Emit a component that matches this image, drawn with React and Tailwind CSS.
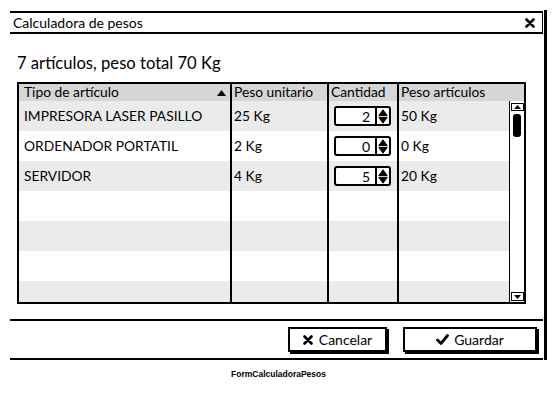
import React from 'react';

const rows = [
  { name: 'IMPRESORA LASER PASILLO', unit: '25 Kg', qty: 2, total: '50 Kg' },
  { name: 'ORDENADOR PORTATIL', unit: '2 Kg', qty: 0, total: '0 Kg' },
  { name: 'SERVIDOR', unit: '4 Kg', qty: 5, total: '20 Kg' },
  null,
  null,
  null,
  null,
];

const Spinner = ({ value }) => (
  <div className="flex h-[20px] w-[57px] border-2 border-black rounded-[3px] bg-white">
    <div className="flex-1 flex items-center justify-end pr-[5px] text-[14px]">{value}</div>
    <div className="w-[14px] border-l-2 border-black flex items-center justify-center">
      <svg width="10" height="15" viewBox="0 0 10 15">
        <path d="M5 0.8 L9.2 6.6 L0.8 6.6 Z" fill="#000" strokeLinejoin="round" stroke="#000" />
        <path d="M5 14.2 L9.2 8.4 L0.8 8.4 Z" fill="#000" strokeLinejoin="round" stroke="#000" />
      </svg>
    </div>
  </div>
);

const Row = ({ row, index }) => (
  <div className={`flex h-[30px] shrink-0 ${index % 2 === 0 ? 'bg-[#ebebeb]' : 'bg-white'}`}>
    <div className="w-[213px] flex items-center pl-[5px] border-r-2 border-black">{row?.name}</div>
    <div className="w-[97px] flex items-center pl-[2px] border-r-2 border-black">{row?.unit}</div>
    <div className="w-[70px] flex items-center pl-[5px] border-r-2 border-black">
      {row && <Spinner value={row.qty} />}
    </div>
    <div className="flex-1 flex items-center pl-[2px]">{row?.total}</div>
  </div>
);

export default function App() {
  return (
    <div className="w-[557px] h-[416px] bg-white text-black relative" style={{ fontFamily: 'Lato, "Noto Sans", sans-serif' }}>
      <div className="flex pt-[10px] pl-[10px]">
        <div className="w-[533px] flex flex-col">
          {/* Title bar */}
          <div className="mt-[1px] h-[23px] border-t-2 border-b-2 border-r border-black flex items-center justify-between pl-[3px] pr-[7px]">
            <span className="text-[14px]">Calculadora de pesos</span>
            <svg width="10" height="10" viewBox="0 0 10 10">
              <path d="M1.5 1.5 L8.5 8.5 M8.5 1.5 L1.5 8.5" stroke="#000" strokeWidth="2.6" strokeLinecap="round" />
            </svg>
          </div>

          {/* Body */}
          <div className="pl-[7px] pr-[7px]">
            <div className="h-[48px] flex items-end pb-[6px] text-[16.6px]">7 artículos, peso total 70 Kg</div>
            <div className="w-[509px] h-[222px] border-2 border-black flex flex-col text-[13.8px] overflow-hidden">
              {/* header */}
              <div className="flex h-[17px] bg-[#d6d6d6] shrink-0">
                <div className="w-[213px] flex items-center justify-between pl-[5px] pr-[4px] border-r-2 border-black">
                  <span>Tipo de artículo</span>
                  <svg width="9" height="6" viewBox="0 0 9 6"><path d="M4.5 0 L9 6 L0 6 Z" fill="#000" /></svg>
                </div>
                <div className="w-[97px] flex items-center pl-[2px] border-r-2 border-black">Peso unitario</div>
                <div className="w-[70px] flex items-center pl-[2px] border-r-2 border-black">Cantidad</div>
                <div className="flex-1 flex items-center pl-[2px]">Peso artículos</div>
              </div>
              <div className="flex flex-1 min-h-0">
                <div className="flex-1 flex flex-col overflow-hidden">
                  {rows.map((r, i) => (
                    <Row key={i} row={r} index={i} />
                  ))}
                </div>
                {/* scrollbar */}
                <div className="w-[15px] border-l border-black bg-white flex flex-col items-center justify-between pt-[2px] pb-[1px]">
                  <div className="flex flex-col items-center">
                    <div className="w-[13px] h-[8px] border border-black flex items-center justify-center">
                      <svg width="7" height="4" viewBox="0 0 7 4"><path d="M3.5 0 L7 4 L0 4 Z" fill="#000" /></svg>
                    </div>
                    <div className="mt-[3px] w-[8px] h-[23px] bg-black rounded-[3px]" />
                  </div>
                  <div className="w-[13px] h-[9px] border border-black flex items-center justify-center">
                    <svg width="7" height="4" viewBox="0 0 7 4"><path d="M3.5 4 L7 0 L0 0 Z" fill="#000" /></svg>
                  </div>
                </div>
              </div>
            </div>
          </div>

          {/* Footer */}
          <div className="mt-[15px] h-[41px] border-t-2 border-b-2 border-black flex items-center justify-end gap-[16px] pr-[6px] text-[14px]">
            <button className="w-[99px] h-[25px] border-2 border-black bg-white shadow-[2px_2px_0_#000] flex items-center justify-center gap-[6px]">
              <svg width="10" height="10" viewBox="0 0 10 10">
                <path d="M1.5 1.5 L8.5 8.5 M8.5 1.5 L1.5 8.5" stroke="#000" strokeWidth="2.6" strokeLinecap="round" />
              </svg>
              <span>Cancelar</span>
            </button>
            <button className="w-[134px] h-[25px] border-2 border-black bg-white shadow-[2px_2px_0_#000] flex items-center justify-center gap-[5px]">
              <svg width="13" height="11" viewBox="0 0 13 11">
                <path d="M1.5 6 L5 9.5 L11.5 1.5" stroke="#000" strokeWidth="2.8" fill="none" strokeLinecap="round" strokeLinejoin="round" />
              </svg>
              <span>Guardar</span>
            </button>
          </div>
        </div>
        <div className="ml-[1px] w-[3px] h-[350px] bg-black" />
      </div>
      <div className="mt-[8px] text-center text-[8.5px] font-bold" style={{ fontFamily: '"Liberation Sans", Arial, sans-serif' }}>
        FormCalculadoraPesos
      </div>
    </div>
  );
}
